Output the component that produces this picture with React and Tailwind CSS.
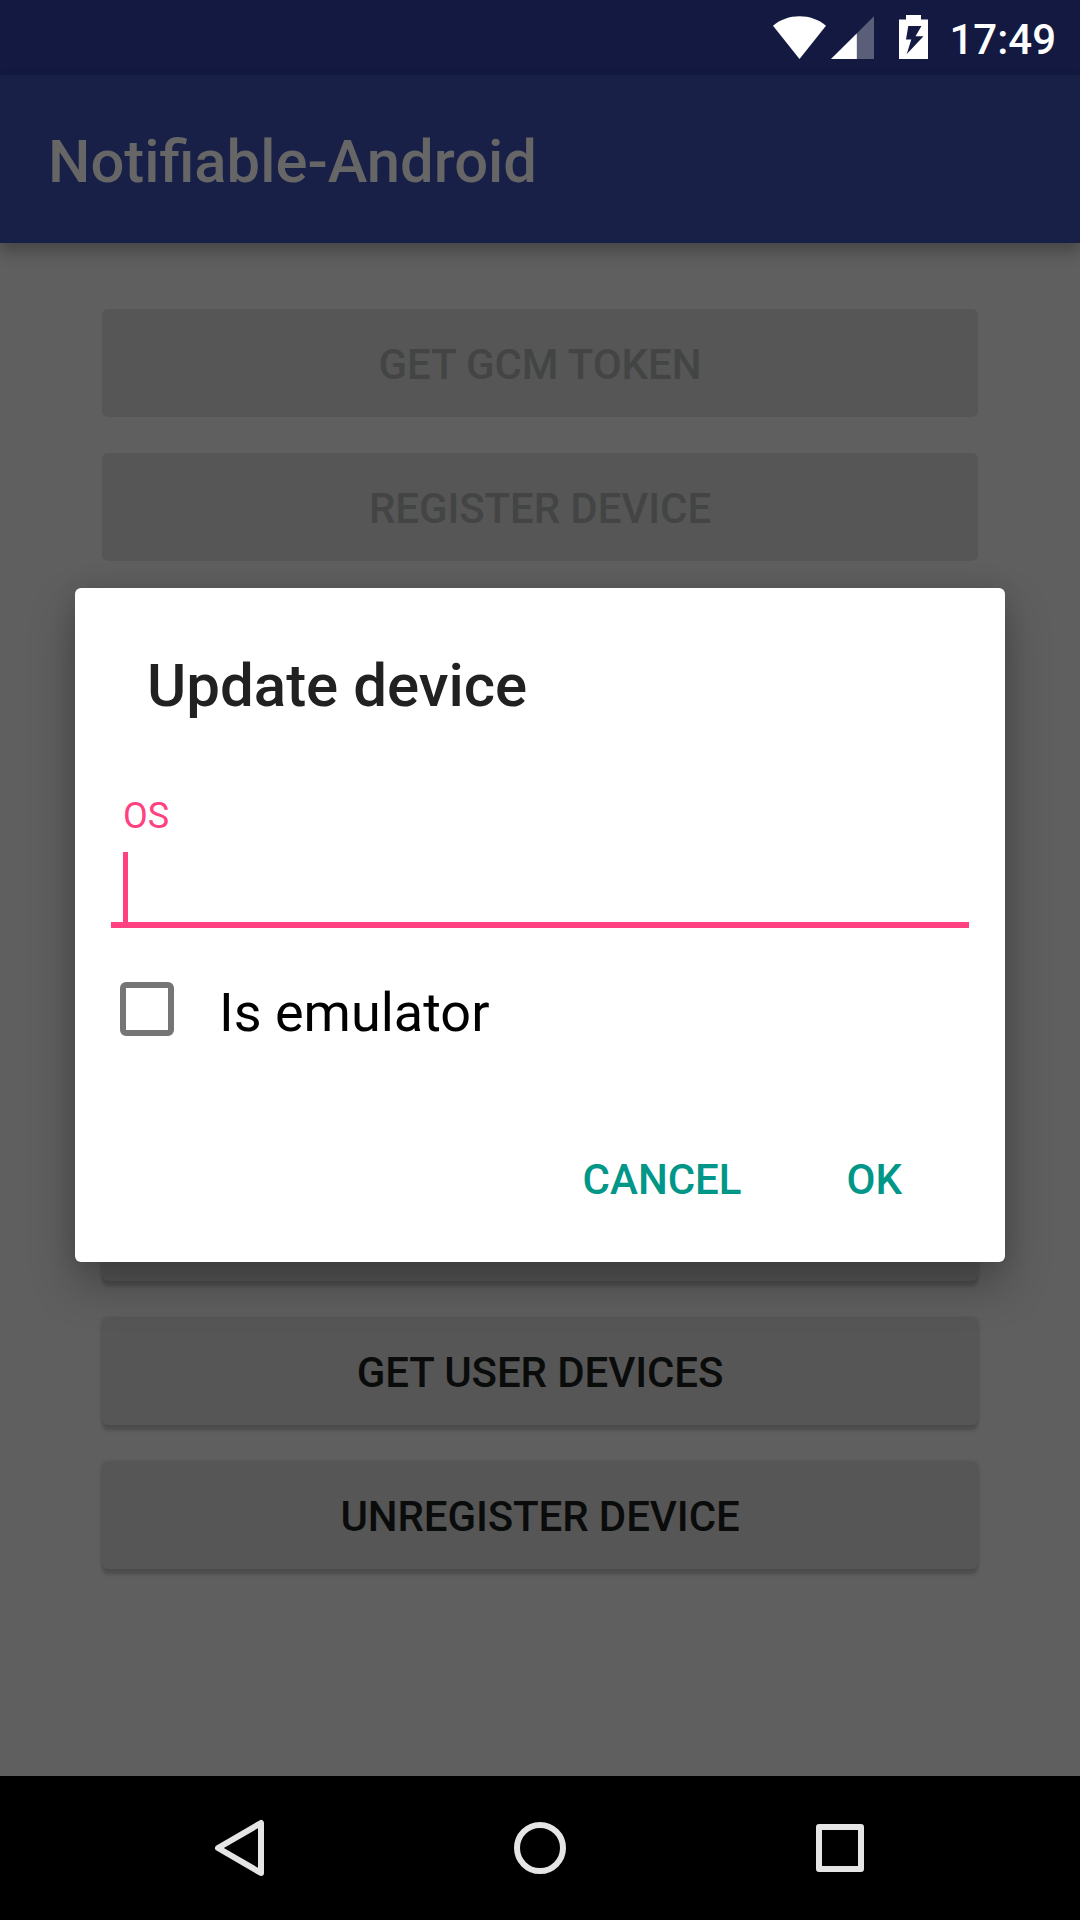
import React from "react";

const actions = [
  { label: "GET GCM TOKEN", enabled: false },
  { label: "REGISTER DEVICE", enabled: false },
  { label: "", enabled: true },
  { label: "", enabled: true },
  { label: "", enabled: true },
  { label: "", enabled: true },
  { label: "", enabled: true },
  { label: "GET USER DEVICES", enabled: true },
  { label: "UNREGISTER DEVICE", enabled: true },
];

function StatusBar() {
  return (
    <div className="flex h-[75px] shrink-0 items-start justify-end bg-[#131940] pr-[24px] text-white">
      <svg className="mt-[15px] mr-[4px] h-[45px] w-[54px]" viewBox="0 0 54 45" fill="currentColor">
        <path d="M0 10.700C7.500 4.600 16.500 1.300 26.500 1.300s19 3.300 26.500 9.400L26.500 44z" />
      </svg>
      <svg className="mt-[15px] mr-[25px] h-[45px] w-[43px]" viewBox="0 0 43 45" fill="currentColor">
        <path d="M43 1.300v42.700H0z" fillOpacity="0.3" />
        <path d="M25.800 18.400V44H0z" />
      </svg>
      <svg className="mt-[15px] mr-[21px] h-[45px] w-[29px]" viewBox="0 0 29 45" fill="currentColor">
        <path
          fillRule="evenodd"
          d="M7 0h15v4.500h7V44H0V4.500h7zM9.300 11h13.200l-6 10.300H24.500L7.800 39l4.500-14.500H7z"
        />
      </svg>
      <span className="mt-[15px] text-[42px] leading-[49px] font-medium">17:49</span>
    </div>
  );
}

function ActionButton({ label, enabled }) {
  return (
    <button
      className={
        enabled
          ? "h-[108px] shrink-0 rounded-[6px] bg-[#565656] pt-[2px] text-[42px] leading-[49px] font-medium tracking-[-0.1px] text-[#0a0b0b] shadow-[0_6px_3px_rgba(0,0,0,0.14),0_1px_4px_rgba(0,0,0,0.14)]"
          : "h-[108px] shrink-0 rounded-[6px] bg-[#565656] pt-[2px] text-[42px] leading-[49px] font-medium tracking-[-0.1px] text-[#434544]"
      }
    >
      {label}
    </button>
  );
}

function NavigationBar() {
  return (
    <nav className="flex h-[144px] shrink-0 items-center justify-center gap-[240px] bg-black text-[#e5e5e5]">
      <svg className="h-[60px] w-[60px]" viewBox="0 0 60 60" fill="none" stroke="currentColor" strokeWidth="6" strokeLinejoin="round">
        <path d="M51 5v50L8 30z" />
      </svg>
      <svg className="h-[60px] w-[60px]" viewBox="0 0 60 60" fill="none" stroke="currentColor" strokeWidth="6">
        <circle cx="30" cy="30" r="23" />
      </svg>
      <svg className="h-[60px] w-[60px]" viewBox="0 0 60 60" fill="none" stroke="currentColor" strokeWidth="6" strokeLinejoin="round">
        <path d="M9 9h42v42H9z" />
      </svg>
    </nav>
  );
}

function UpdateDeviceDialog() {
  return (
    <div role="dialog" className="flex h-[674px] w-[930px] flex-col rounded-[6px] bg-white shadow-[0_22px_46px_rgba(0,0,0,0.28),0_0_22px_rgba(0,0,0,0.1)]">
      <h2 className="mt-[63px] ml-[72px] text-[60px] leading-[70px] font-medium text-[#212121]">Update device</h2>
      <div className="mx-9 mt-[74px] border-b-[6px] border-[#ff4081] pl-3">
        <div className="text-[36px] leading-[42px] text-[#ff4081]">OS</div>
        <div className="mt-[15px] h-[70px] w-[5px] bg-[#ff4081]" />
      </div>
      <label className="mt-[48px] ml-[45px] flex items-start">
        <span className="mt-[6px] h-[54px] w-[54px] rounded-[6px] border-[6px] border-[#757575]" />
        <span className="ml-[45px] pt-[5px] text-[54px] leading-[64px] text-black">Is emulator</span>
      </label>
      <div className="mt-[110px] flex justify-end gap-[105px] pr-[103px] text-[42px] leading-[49px] font-medium text-[#009688]">
        <button>CANCEL</button>
        <button>OK</button>
      </div>
    </div>
  );
}

export default function App() {
  return (
    <div className="relative flex h-[1920px] w-[1080px] flex-col overflow-hidden bg-[#5f5f5f] font-['Roboto',sans-serif]">
      <StatusBar />
      <header className="flex h-[168px] shrink-0 items-center bg-[#192048] pt-[6px] pl-12 shadow-[0_9px_14px_rgba(0,0,0,0.25)]">
        <h1 className="text-[60px] leading-[70px] font-medium text-[#666666]">
          <span className="inline-block origin-left scale-x-[0.996]">Notifiable-Android</span>
        </h1>
      </header>
      <main className="flex flex-1 flex-col gap-9 px-[102px] pt-[66px]">
        {actions.map((action, index) => (
          <ActionButton key={index} label={action.label} enabled={action.enabled} />
        ))}
      </main>
      <NavigationBar />
      <div className="absolute inset-x-0 top-[588px] flex justify-center">
        <UpdateDeviceDialog />
      </div>
    </div>
  );
}
